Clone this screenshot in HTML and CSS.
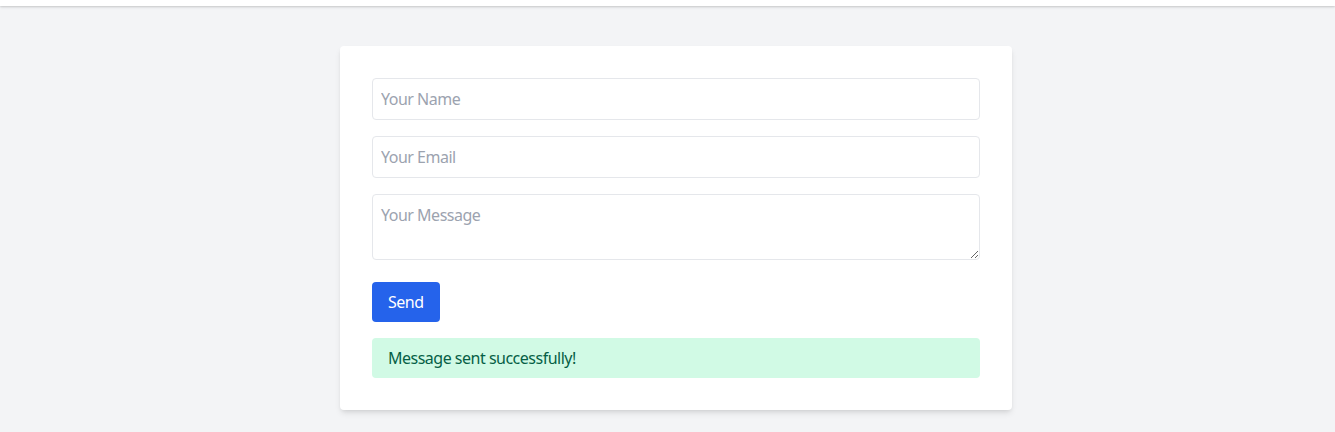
FILE: index.html
```html
<!DOCTYPE html>
<html lang="en">
<head>
<meta charset="utf-8">
<title>Contact</title>
<link rel="stylesheet" href="styles.css">
</head>
<body>
<header class="topbar"></header>
<main class="page">
  <div class="card">
    <form class="form">
      <input class="field" type="text" placeholder="Your Name">
      <input class="field" type="email" placeholder="Your Email">
      <textarea class="field area" rows="2" placeholder="Your Message"></textarea>
      <div class="actions"><button type="button" class="btn">Send</button></div>
      <div class="alert">Message sent successfully!</div>
    </form>
  </div>
</main>
</body>
</html>
```
FILE: styles.css
```css
* { box-sizing: border-box; }
html, body { margin: 0; padding: 0; }
body {
  background: #f3f4f6;
  font-family: "Segoe UI", "Noto Sans", "Open Sans", sans-serif;
  font-size: 16px;
  line-height: 24px;
  letter-spacing: -0.5px;
  color: #111827;
  height: 432px;
  overflow: hidden;
}
.topbar {
  height: 6px;
  background: #ffffff;
  box-shadow: 0 1px 3px rgba(0,0,0,0.12), 0 1px 2px rgba(0,0,0,0.08);
  position: relative;
}
.page {
  padding-top: 40px;
  padding-left: 17px;
  display: flex;
  justify-content: center;
}
.card {
  width: 672px;
  background: #fff;
  border-radius: 4px;
  padding: 32px;
  box-shadow: 0 4px 6px -1px rgba(0,0,0,0.1), 0 2px 4px -2px rgba(0,0,0,0.1);
}
.form {
  display: flex;
  flex-direction: column;
  gap: 16px;
}
.field {
  display: block;
  width: 100%;
  font: inherit;
  letter-spacing: inherit;
  line-height: 24px;
  padding: 8px;
  border: 1px solid #e5e7eb;
  border-radius: 4px;
  color: #111827;
  background: #fff;
  outline: none;
}
.field::placeholder { color: #9ca3af; }
.area {
  height: 66px;
  resize: vertical;
}
.actions {
  margin-top: 6px;
  display: flex;
}
.btn {
  font: inherit;
  letter-spacing: inherit;
  line-height: 24px;
  padding: 8px 16px;
  background: #2563eb;
  color: #fff;
  border: none;
  border-radius: 4px;
}
.alert {
  background: #d1fae5;
  color: #065f46;
  padding: 8px 16px;
  border-radius: 4px;
}
```
